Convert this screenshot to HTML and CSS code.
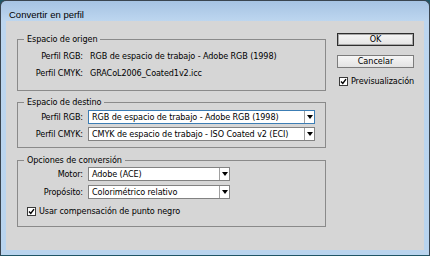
FILE: index.html
```html
<!DOCTYPE html>
<html lang="es">
<head>
    <meta charset="UTF-8">
    <meta name="viewport" content="width=device-width, initial-scale=1.0">
    <title>Convertir en perfil</title>
    <link rel="stylesheet" href="styles.css">
</head>
<body>
    <div class="window">
        <div class="titlebar">Convertir en perfil</div>
        <div class="client">
            <div class="groups">
                <fieldset class="group origin">
                    <legend>Espacio de origen</legend>
                    <div class="row">
                        <span class="label">Perfil RGB:</span>
                        <span class="value">RGB de espacio de trabajo - Adobe RGB (1998)</span>
                    </div>
                    <div class="row">
                        <span class="label">Perfil CMYK:</span>
                        <span class="value">GRACoL2006_Coated1v2.icc</span>
                    </div>
                </fieldset>

                <fieldset class="group target">
                    <legend>Espacio de destino</legend>
                    <div class="row">
                        <span class="label">Perfil RGB:</span>
                        <div class="select wide focused">
                            <span class="text">RGB de espacio de trabajo - Adobe RGB (1998)</span>
                            <span class="arrow"></span>
                        </div>
                    </div>
                    <div class="row">
                        <span class="label">Perfil CMYK:</span>
                        <div class="select wide">
                            <span class="text">CMYK de espacio de trabajo - ISO Coated v2 (ECI)</span>
                            <span class="arrow"></span>
                        </div>
                    </div>
                </fieldset>

                <fieldset class="group options">
                    <legend>Opciones de conversión</legend>
                    <div class="row">
                        <span class="label">Motor:</span>
                        <div class="select">
                            <span class="text">Adobe (ACE)</span>
                            <span class="arrow"></span>
                        </div>
                    </div>
                    <div class="row">
                        <span class="label">Propósito:</span>
                        <div class="select">
                            <span class="text">Colorimétrico relativo</span>
                            <span class="arrow"></span>
                        </div>
                    </div>
                    <label class="check blackpoint">
                        <span class="box"><svg viewBox="0 0 7 7" width="7" height="7"><path d="M1 3.5 L2.8 5.4 L6 1.2" fill="none" stroke="#000" stroke-width="1.4"/></svg></span>
                        Usar compensación de punto negro
                    </label>
                </fieldset>
            </div>

            <div class="actions">
                <button class="btn default">OK</button>
                <button class="btn">Cancelar</button>
                <label class="check preview">
                    <span class="box"><svg viewBox="0 0 7 7" width="7" height="7"><path d="M1 3.5 L2.8 5.4 L6 1.2" fill="none" stroke="#000" stroke-width="1.4"/></svg></span>
                    Previsualización
                </label>
            </div>
        </div>
    </div>
</body>
</html>
```

FILE: styles.css
```css
* {
    box-sizing: border-box;
}

body {
    margin: 0;
    background-color: #1f5566;
    font-family: "DejaVu Sans Condensed", "Liberation Sans", sans-serif;
    font-size: 9px;
    letter-spacing: -0.1px;
    color: #000;
}

.window {
    display: flex;
    flex-direction: column;
    width: 430px;
    height: 256px;
    padding: 0 5px 5px 5px;
    border: 1px solid #3a4550;
    border-bottom-color: #1f5566;
    border-radius: 6px 6px 0 0;
    background: linear-gradient(#a6c3e3, #bdd6ef 20px, #b9d4ee);
}

.titlebar {
    height: 20px;
    padding: 8px 0 0 3px;
    font-family: "Liberation Sans", sans-serif;
    font-size: 9.5px;
    letter-spacing: 0;
    line-height: 12px;
}

.client {
    display: flex;
    flex: 1;
    padding: 12px 0 0 11px;
    background-color: #d6d6d6;
}

/* group boxes */
.groups {
    width: 309px;
}

.group {
    min-width: 0;
    margin: 0;
    padding: 0;
    border: 1px solid #8a8a8a;
}

.group legend {
    margin-left: 6px;
    padding: 0 3px;
    line-height: 12px;
}

.origin {
    padding: 2px 0 9px 0;
}

.origin .row {
    height: 17px;
}

.target {
    margin-top: 5px;
    padding: 2px 0 6px 0;
}

.target .row + .row {
    margin-top: 3px;
}

.options {
    margin-top: 6px;
    padding: 1px 0 8px 0;
}

.options .row + .row {
    margin-top: 4px;
}

.row {
    display: flex;
    align-items: center;
    height: 14px;
}

.label {
    width: 65px;
    margin-right: 5px;
    text-align: right;
    white-space: nowrap;
}

.value {
    padding-left: 2px;
    white-space: nowrap;
}

/* drop downs */
.select {
    display: flex;
    width: 142px;
    height: 14px;
    background-color: #fff;
    border: 1px solid #828282;
}

.select.wide {
    width: 227px;
}

.select.focused {
    border-color: #3c7db4;
}

.select .text {
    flex: 1;
    padding-left: 3px;
    line-height: 12px;
    white-space: nowrap;
    overflow: hidden;
}

.select .arrow {
    display: flex;
    align-items: center;
    justify-content: center;
    width: 10px;
    border-left: 1px solid #a0a0a0;
}

.select .arrow::after {
    content: "";
    border-left: 3px solid transparent;
    border-right: 3px solid transparent;
    border-top: 4px solid #000;
}

/* checkboxes */
.check {
    display: flex;
    align-items: center;
    height: 12px;
    white-space: nowrap;
}

.box {
    display: flex;
    align-items: center;
    justify-content: center;
    width: 9px;
    height: 9px;
    margin-right: 3px;
    background-color: #fff;
    border: 1px solid #3a3a3a;
}

.blackpoint {
    height: 14px;
    margin: 5px 0 0 9px;
}

/* buttons */
.actions {
    display: flex;
    flex-direction: column;
    width: 77px;
    margin-left: 11px;
}

.btn {
    display: block;
    width: 77px;
    height: 13px;
    padding: 0;
    font: inherit;
    line-height: 11px;
    color: #000;
    text-align: center;
    background: linear-gradient(#f6f6f6, #e3e3e3);
    border: 1px solid #7c7c7c;
}

.btn.default {
    border-color: #2e2e2e;
    box-shadow: inset 0 0 0 1px #a8a8a8;
}

.btn + .btn {
    margin-top: 9px;
}

.preview {
    margin: 7px 0 0 2px;
}
```
